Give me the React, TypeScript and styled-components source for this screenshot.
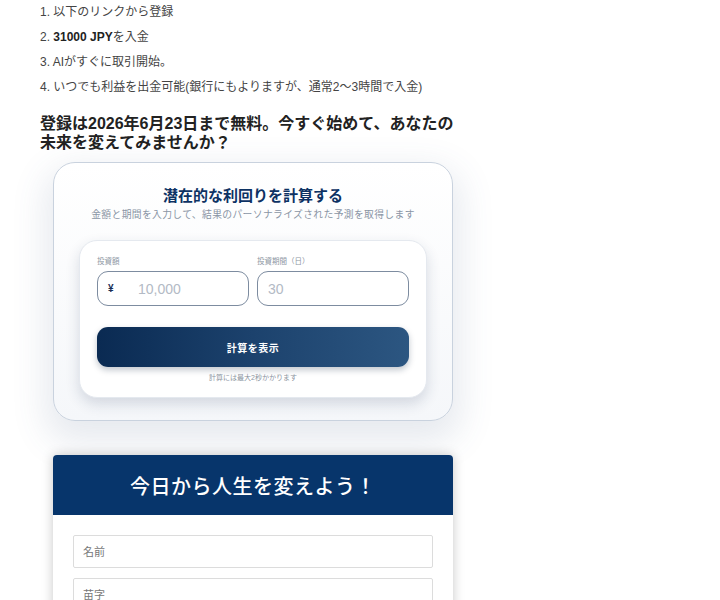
import styled, { createGlobalStyle } from 'styled-components'

const GlobalStyle = createGlobalStyle`
  body {
    margin: 0;
    background: #fff;
    font-family: "Liberation Sans", "Noto Sans CJK JP", sans-serif;
    color: #333;
  }
`

const Page = styled.div`
  width: 426px;
  padding: 4px 0 0 40px;
`

const Steps = styled.ol`
  list-style: none;
  margin: 0;
  padding: 0;
`

const Step = styled.li`
  font-size: 12px;
  line-height: 17px;
  color: #444;
  margin-bottom: 8px;
  b {
    color: #222;
    font-weight: 700;
  }
`

const Headline = styled.h2`
  margin: 18px 0 10px;
  font-size: 16px;
  line-height: 19px;
  font-weight: 700;
  color: #222;
`

const CalcCard = styled.section`
  margin: 0 13px;
  box-sizing: border-box;
  width: 400px;
  padding: 22px 25px 22px 25px;
  border: 1.5px solid #c9d2de;
  border-radius: 22px;
  background: linear-gradient(180deg, #ffffff 0%, #f5f7fa 100%);
  box-shadow: 0 14px 34px 8px rgba(70, 95, 130, 0.13);
  text-align: center;
`

const CalcTitle = styled.h3`
  margin: 0;
  font-size: 15px;
  line-height: 22px;
  font-weight: 700;
  color: #0d3263;
`

const CalcSub = styled.p`
  margin: 0 0 17px;
  font-size: 9.8px;
  line-height: 16px;
  color: #8a95a5;
  letter-spacing: 0.35px;
`

const Inner = styled.div`
  padding: 16px 17px 14px;
  border: 1px solid #e5e9ef;
  border-radius: 18px;
  background: #fff;
  box-shadow: 0 6px 14px rgba(30, 50, 85, 0.16);
  text-align: left;
`

const Fields = styled.div`
  display: grid;
  grid-template-columns: minmax(0, 1fr) minmax(0, 1fr);
  gap: 8px;
`

const Field = styled.label`
  display: flex;
  flex-direction: column;
  min-width: 0;
`

const FieldLabel = styled.span`
  font-size: 7.5px;
  line-height: 10px;
  color: #8d96a3;
  margin-bottom: 4px;
`

const InputBox = styled.div`
  display: flex;
  align-items: center;
  height: 35px;
  box-sizing: border-box;
  border: 1.5px solid #7d8ca0;
  border-radius: 11px;
  background: #fff;
  padding: 0 10px;
`

const Currency = styled.span`
  flex: none;
  font-size: 10px;
  font-weight: 700;
  color: #1a2f55;
  width: 30px;
`

const Input = styled.input`
  flex: 1;
  width: 100%;
  min-width: 0;
  border: 0;
  outline: none;
  background: transparent;
  font-family: inherit;
  font-size: 14px;
  color: #333;
  padding: 0;
  &::placeholder {
    color: #b3bac5;
  }
`

const CalcButton = styled.button`
  display: block;
  width: 100%;
  height: 40px;
  margin-top: 21px;
  border: 0;
  border-radius: 11px;
  background: linear-gradient(90deg, #0a2a52 0%, #1c426d 50%, #2c5681 100%);
  box-shadow: 0 3px 6px rgba(10, 30, 60, 0.25);
  color: #fff;
  font-family: inherit;
  font-size: 10px;
  font-weight: 700;
  letter-spacing: 0.5px;
`

const Note = styled.p`
  margin: 6px 0 0;
  font-size: 7px;
  line-height: 10px;
  color: #8b94a0;
  text-align: center;
`

const SignupCard = styled.section`
  margin: 34px 13px 0;
  width: 400px;
  border-radius: 4px;
  overflow: hidden;
  background: #fff;
  box-shadow: 0 0 12px rgba(0, 0, 0, 0.22);
`

const SignupHead = styled.div`
  height: 60px;
  display: flex;
  align-items: center;
  justify-content: center;
  background: #07356b;
  color: #fff;
  font-size: 20px;
  font-weight: 500;
  letter-spacing: 0.5px;
`

const SignupBody = styled.div`
  display: flex;
  flex-direction: column;
  gap: 10px;
  padding: 20px 20px 30px;
`

const TextField = styled.input`
  height: 33px;
  box-sizing: border-box;
  border: 1px solid #dcdcdc;
  border-radius: 2px;
  padding: 0 9px;
  font-family: inherit;
  font-size: 11px;
  outline: none;
  &::placeholder {
    color: #777;
  }
`

export default function App() {
  return (
    <>
      <GlobalStyle />
      <Page>
        <Steps>
          <Step>1. 以下のリンクから登録</Step>
          <Step>2. <b>31000 JPY</b>を入金</Step>
          <Step>3. AIがすぐに取引開始。</Step>
          <Step>4. いつでも利益を出金可能(銀行にもよりますが、通常2〜3時間で入金)</Step>
        </Steps>
        <Headline>登録は2026年6月23日まで無料。今すぐ始めて、あなたの未来を変えてみませんか？</Headline>
        <CalcCard>
          <CalcTitle>潜在的な利回りを計算する</CalcTitle>
          <CalcSub>金額と期間を入力して、結果のパーソナライズされた予測を取得します</CalcSub>
          <Inner>
            <Fields>
              <Field>
                <FieldLabel>投資額</FieldLabel>
                <InputBox>
                  <Currency>¥</Currency>
                  <Input placeholder="10,000" />
                </InputBox>
              </Field>
              <Field>
                <FieldLabel>投資期間（日）</FieldLabel>
                <InputBox>
                  <Input placeholder="30" />
                </InputBox>
              </Field>
            </Fields>
            <CalcButton>計算を表示</CalcButton>
            <Note>計算には最大2秒かかります</Note>
          </Inner>
        </CalcCard>
        <SignupCard>
          <SignupHead>今日から人生を変えよう！</SignupHead>
          <SignupBody>
            <TextField placeholder="名前" />
            <TextField placeholder="苗字" />
          </SignupBody>
        </SignupCard>
      </Page>
    </>
  )
}
